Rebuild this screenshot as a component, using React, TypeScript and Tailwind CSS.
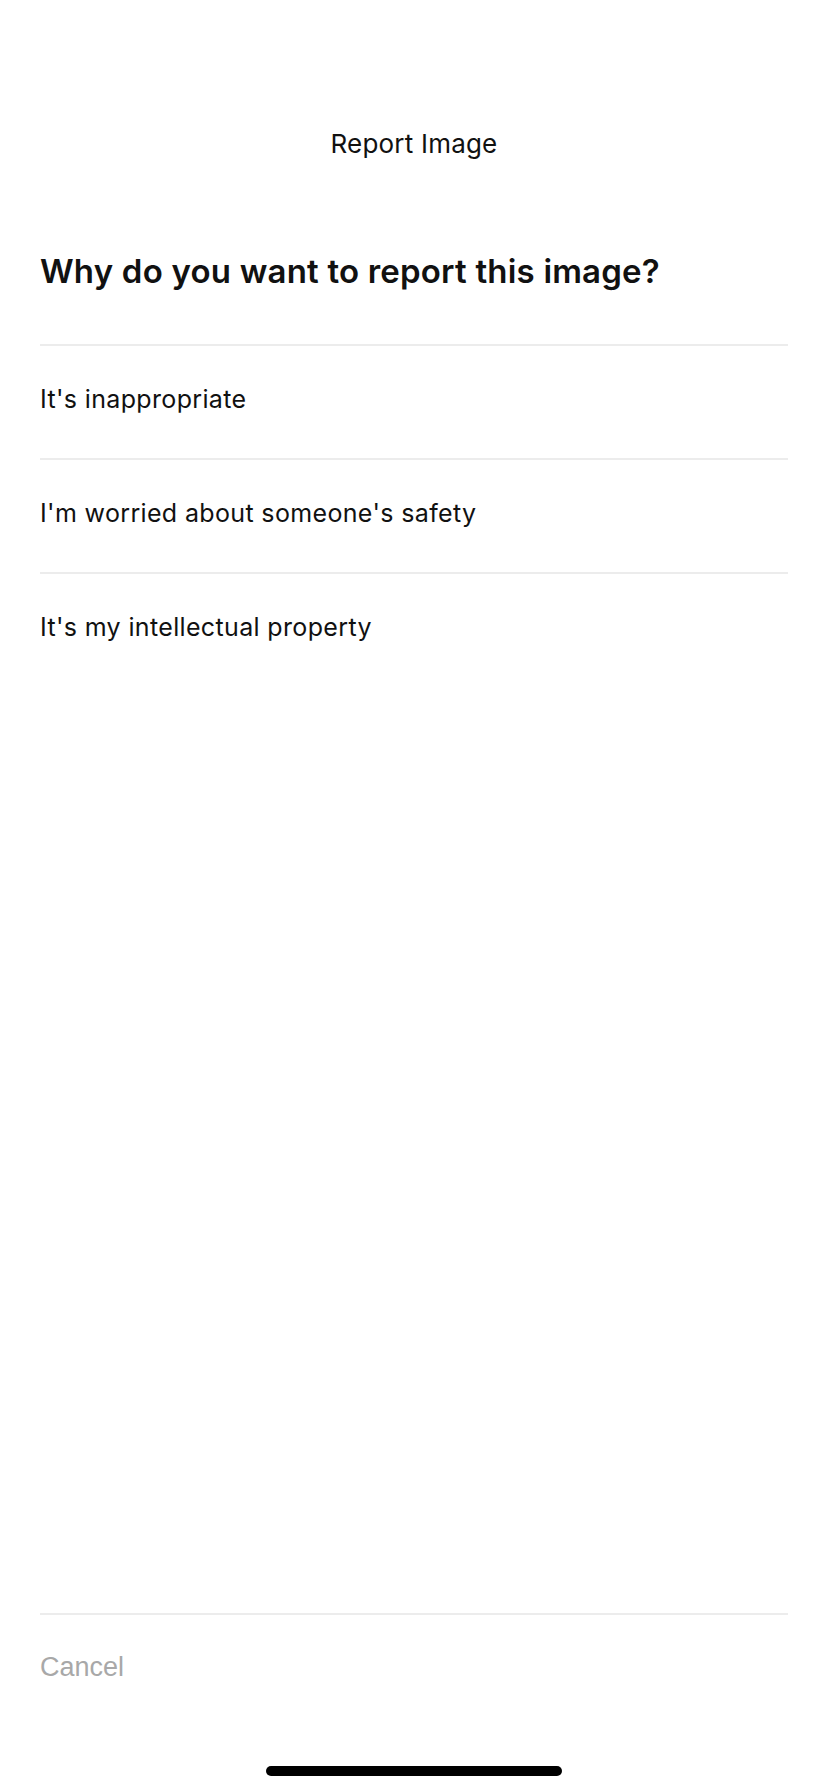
import React from 'react'

const reasons: string[] = [
  "It's inappropriate",
  "I'm worried about someone's safety",
  "It's my intellectual property",
]

export default function App(): React.JSX.Element {
  return (
    <div className="w-[828px] h-[1792px] bg-white flex flex-col font-['Inter','Liberation_Sans',sans-serif] text-[#111111]">
      <div className="pt-[129px] h-[159px] text-center text-[26px] leading-[30px] tracking-[0.2px]">
        Report Image
      </div>
      <h1 className="mt-[92px] px-10 text-[33px] leading-[40px] font-semibold tracking-[0.2px]">
        Why do you want to report this image?
      </h1>
      <ul className="mt-[53px] mx-10">
        {reasons.map((reason) => (
          <li
            key={reason}
            className="h-[114px] border-t-2 border-[#ececec] flex items-center pb-[4px] text-[25px] tracking-[0.35px]"
          >
            {reason}
          </li>
        ))}
      </ul>
      <div className="flex-1" />
      <div className="mx-10 border-t-2 border-[#ececec] h-[106px] flex items-center font-['Liberation_Sans',sans-serif] text-[27px] text-[#a8a8a8]">
        Cancel
      </div>
      <div className="h-[73px] flex justify-center pt-[47px]">
        <div className="w-[296px] h-[10px] rounded-full bg-black" />
      </div>
    </div>
  )
}
